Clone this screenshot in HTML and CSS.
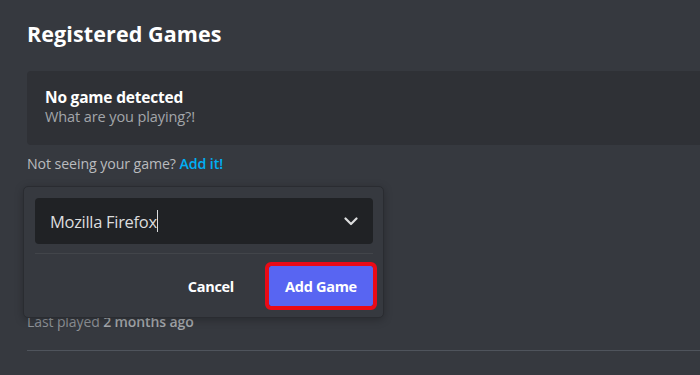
FILE: index.html
```html
<!DOCTYPE html>
<html>
<head>
<meta charset="utf-8">
<link rel="stylesheet" href="styles.css">
</head>
<body>
<div class="page">
  <h1 class="title">Registered Games</h1>
  <div class="card">
    <div class="card-title">No game detected</div>
    <div class="card-sub">What are you playing?!</div>
  </div>
  <div class="hint">Not seeing your game? <span class="link">Add it!</span></div>
  <div class="games">
    <div class="game-row">
      <div class="played">Last played <b>2 months ago</b></div>
    </div>
    <div class="popup">
      <div class="select">
        <span class="select-text">Mozilla Firefox</span><span class="caret"></span>
        <svg class="chev" width="14" height="9" viewBox="0 0 14 9"><path d="M1.5 1.5 L7 7 L12.5 1.5" fill="none" stroke="#dcddde" stroke-width="2.2" stroke-linecap="round" stroke-linejoin="round"/></svg>
      </div>
      <div class="popup-divider"></div>
      <div class="actions">
        <button class="btn-cancel">Cancel</button>
        <button class="btn-add">Add Game</button>
      </div>
    </div>
  </div>
</div>
</body>
</html>
```
FILE: styles.css
```css
html, body {
  margin: 0;
  padding: 0;
  background: #36393f;
  width: 700px;
  height: 375px;
  overflow: hidden;
}
.page {
  padding: 22px 0 0 27px;
  font-family: "Open Sans", "Noto Sans", sans-serif;
  color: #dcddde;
}
.title {
  margin: 0;
  font-family: "Open Sans", sans-serif;
  font-weight: 700;
  font-size: 21.5px;
  line-height: 24px;
  color: #ffffff;
  letter-spacing: 0.1px;
}
.card {
  margin-top: 25px;
  height: 74px;
  box-sizing: border-box;
  background: #2f3136;
  border-radius: 4px 0 0 4px;
  padding: 16px 0 0 18px;
}
.card-title {
  font-weight: 700;
  font-size: 15.5px;
  line-height: 20px;
  color: #ffffff;
  letter-spacing: -0.2px;
}
.card-sub {
  font-size: 14.5px;
  line-height: 19px;
  color: #a3a6aa;
  letter-spacing: -0.1px;
}
.hint {
  margin-top: 10px;
  font-size: 14.2px;
  line-height: 18px;
  color: #b9bbbe;
  letter-spacing: -0.1px;
}
.link {
  color: #00aff4;
  font-weight: 600;
}
.games {
  position: relative;
  margin-top: 13px;
}
.game-row {
  height: 165px;
  box-sizing: border-box;
  padding-top: 127px;
  border-bottom: 1px solid #4f545c;
  margin-bottom: 0;
}
.played {
  font-size: 14px;
  line-height: 18px;
  color: #8e9297;
  letter-spacing: -0.1px;
}
.played b {
  font-weight: 600;
  color: #a3a6aa;
}
.popup {
  position: absolute;
  left: -4px;
  top: 0;
  width: 361px;
  height: 132px;
  box-sizing: border-box;
  background: #36393f;
  border: 1px solid #2a2c31;
  border-radius: 5px;
  box-shadow: 0 2px 8px rgba(0,0,0,0.25);
  padding: 11px 10px 0 11px;
}
.select {
  height: 46px;
  background: #202225;
  border-radius: 4px;
  display: flex;
  align-items: center;
  padding: 0 15px 0 15px;
}
.select-text {
  font-size: 16.5px;
  color: #dcddde;
  letter-spacing: -0.3px;
}
.caret {
  display: inline-block;
  width: 1px;
  height: 22px;
  background: #dcddde;
  margin-left: 0;
}
.chev {
  margin-left: auto;
}
.popup-divider {
  margin-top: 9px;
  height: 1px;
  background: #42454a;
}
.actions {
  display: flex;
  justify-content: flex-end;
  align-items: center;
  padding-top: 12px;
  gap: 35px;
}
.btn-cancel, .btn-add {
  font-family: "Open Sans", "Noto Sans", sans-serif;
  font-weight: 700;
  font-size: 14.5px;
  letter-spacing: -0.3px;
  border: none;
  cursor: pointer;
}
.btn-cancel {
  background: transparent;
  color: #ffffff;
  padding: 0;
}
.btn-add {
  width: 104px;
  height: 40px;
  background: #5865f2;
  color: #ffffff;
  border-radius: 2px;
  outline: 4px solid #ea0a16;
  margin-right: 0;
}
```
